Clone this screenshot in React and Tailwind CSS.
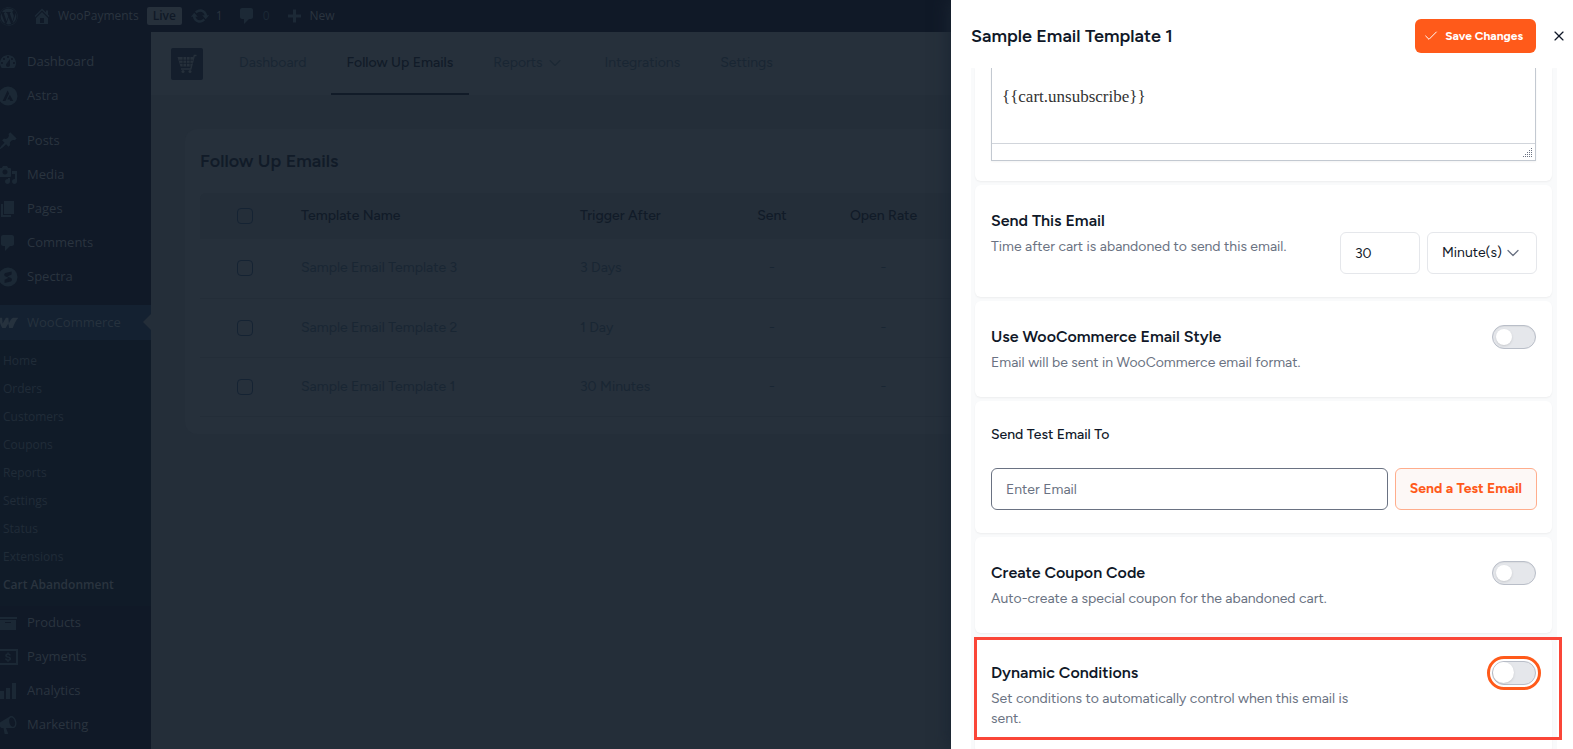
import React from 'react';
import { FaWordpress } from 'react-icons/fa';
import { ChevronDown, Check, X } from 'lucide-react';

const ICONS = {
  dashboard:
    'M3.76 16h12.48c1.1-1.37 1.76-3.11 1.76-5 0-4.42-3.58-8-8-8s-8 3.58-8 8c0 1.89.66 3.63 1.76 5zM10 4c.55 0 1 .45 1 1s-.45 1-1 1-1-.45-1-1 .45-1 1-1zM6 6c.55 0 1 .45 1 1s-.45 1-1 1-1-.45-1-1 .45-1 1-1zm8 0c.55 0 1 .45 1 1s-.45 1-1 1-1-.45-1-1 .45-1 1-1zm-5.37 5.55L12 7v6c0 1.1-.9 2-2 2s-2-.9-2-2c0-.57.24-1.08.63-1.45zM4 10c.55 0 1 .45 1 1s-.45 1-1 1-1-.45-1-1 .45-1 1-1zm12 0c.55 0 1 .45 1 1s-.45 1-1 1-1-.45-1-1 .45-1 1-1z',
  astra:
    'M10 .5a9.500 9.500 0 1 0 0 19a9.500 9.500 0 1 0 0-19zM9.600 4.600l1.500 3L7.400 14.900H4.600zM11.800 8.800l3.400 6.100h-2.900l-.6-1.400H9.400z',
  posts:
    'M10.44 3.02l1.82-1.82 6.36 6.35-1.83 1.82c-1.05-.68-2.48-.57-3.41.36l-.75.75c-.92.93-1.04 2.35-.35 3.41l-1.83 1.82-2.41-2.41-2.8 2.79c-.42.42-3.38 2.71-3.8 2.29s1.86-3.39 2.28-3.81l2.79-2.79L4.1 9.36l1.83-1.82c1.05.69 2.48.57 3.4-.36l.75-.75c.93-.92 1.05-2.35.36-3.41z',
  media:
    'M13 11V4c0-.55-.45-1-1-1h-1.67L9 1H5L3.67 3H2c-.55 0-1 .45-1 1v7c0 .55.45 1 1 1h10c.55 0 1-.45 1-1zM7 4.5c1.38 0 2.5 1.12 2.5 2.5S8.38 9.5 7 9.5 4.5 8.38 4.5 7 5.62 4.5 7 4.5zM14 6h5v10.5c0 1.38-1.12 2.5-2.5 2.5S14 17.88 14 16.5s1.12-2.5 2.5-2.5c.17 0 .34.02.5.05V9h-3V6zm-4 8.05V13h2v3.5c0 1.38-1.12 2.5-2.5 2.5S7 17.88 7 16.5 8.12 14 9.5 14c.17 0 .34.02.5.05z',
  pages: 'M6 15V2h10v13H6zm-1 1h8v2H3V5h2v11z',
  comments:
    'M5 2h9c1.1 0 2 .9 2 2v7c0 1.1-.9 2-2 2h-2l-5 5v-5H5c-1.1 0-2-.9-2-2V4c0-1.1.9-2 2-2z',
  spectra:
    'M10 .5a9.500 9.500 0 1 0 0 19a9.500 9.500 0 1 0 0-19zM13.600 4.400v3.100l-4.200 2.100 3.700 1.500c1.300 1 .9 2.700-.3 3.400L6.600 16v-3.200l4-2-3.500-1.500c-1.400-1-1.100-2.700.2-3.400z',
  woo: 'M1 4.800h3.100l.5 5.800 3.300-5.800h2.500l.5 5.400c1.300-3 2.400-4.600 4-5.400h5.600c-2.700 2.300-3.900 5.800-5.700 10.200h-3.600l-.9-4.600L7.700 15H4.200C2.500 12.400 1.700 9 1 4.800z',
  products: 'M19 4v2H1V4h18zM2 7h16v10H2V7zm11 3V9H7v1h6z',
  payments:
    'M0 2h20v16H0zM2 4v12h16V4zM9.200 5.500h1.600v1c1.100.2 1.900.8 2.100 1.900h-1.700c-.2-.5-.6-.7-1.200-.7-.7 0-1.100.3-1.100.8 0 .6.7.7 1.500.9 1.400.3 2.700.8 2.700 2.300 0 1.200-.9 1.900-2.300 2.100v1H9.200v-1C8 13.600 7 12.900 6.900 11.600h1.700c.1.600.6.9 1.400.9.700 0 1.300-.2 1.300-.8 0-.5-.4-.7-1.400-.9C8.500 10.500 7.200 10 7.200 8.600c0-1.100.8-1.900 2-2.100z',
  analytics: 'M18 18V2h-4v16h4zm-6 0V7H8v11h4zm-6 0v-8H2v8h4z',
  marketing:
    'M18.150 5.940c.46 1.620.38 3.220-.02 4.480-.42 1.280-1.260 2.180-2.300 2.480-.3.080-.6.100-1.020.100h-6.800l2.220 5.500c.02.300-.2.500-.48.500H6.950c-.28 0-.5-.2-.48-.5l-1-5.500H4.250c-1.100 0-2.200-.9-2.620-2.520-.44-1.600.1-3 1.060-3.500l9-5.420c.3-.2.5-.3.980-.46 2.100-.6 4.600 1.600 5.480 4.840zM15.300 11.700c1.500-.4 2.200-2.700 1.550-5.300-.7-2.500-2.400-4.200-3.900-3.800-1.500.4-2.200 2.700-1.500 5.300.7 2.500 2.400 4.200 3.850 3.800z',
  home: 'M16 8.500l1.530 1.530-1.060 1.060L10 4.600l-6.470 6.490-1.060-1.060L10 2.500l4 4v-2h2v4zm-6-2.460l6 5.990V18H4v-5.970zM12 17v-5H8v5h4z',
  update:
    'M10.200 3.280c3.530 0 6.430 2.610 6.920 6h2.080l-3.500 4-3.500-4h2.320c-.45-1.970-2.210-3.450-4.320-3.450-1.450 0-2.730.71-3.540 1.780L4.950 5.660C6.230 4.200 8.110 3.280 10.200 3.280zm-.4 13.440c-3.520 0-6.430-2.610-6.920-6H.8l3.500-4c1.170 1.330 2.330 2.670 3.500 4H5.480c.45 1.970 2.210 3.450 4.320 3.450 1.450 0 2.730-.71 3.540-1.780l1.710 1.950c-1.280 1.460-3.150 2.380-5.250 2.380z',
  plus: 'M17 8.500v3h-5v5H9v-5H4v-3h5v-5h3v5h5z',
};

function Icon({ name }) {
  return (
    <svg viewBox="0 0 20 20" className="size-5 shrink-0" fill="currentColor" fillRule="evenodd" aria-hidden="true">
      <path d={ICONS[name]} />
    </svg>
  );
}

function MenuItem({ icon, children }) {
  return (
    <li>
      <a href="#" className="flex h-[34px] items-center gap-[9px] pr-2 text-[#2a343f]">
        <span className="-ml-[2px] flex text-[#1b2835]"><Icon name={icon} /></span>
        {children}
      </a>
    </li>
  );
}

const SUBMENU = ['Home', 'Orders', 'Customers', 'Coupons', 'Reports', 'Settings', 'Status', 'Extensions'];

function Sidebar() {
  return (
    <nav aria-label="Admin menu" className="w-[151px] shrink-0 bg-[#101927] pt-[13px] text-[13px]">
      <ul>
        <MenuItem icon="dashboard">Dashboard</MenuItem>
        <MenuItem icon="astra">Astra</MenuItem>
      </ul>
      <ul className="pt-[11px]">
        <MenuItem icon="posts">Posts</MenuItem>
        <MenuItem icon="media">Media</MenuItem>
        <MenuItem icon="pages">Pages</MenuItem>
        <MenuItem icon="comments">Comments</MenuItem>
        <MenuItem icon="spectra">Spectra</MenuItem>
      </ul>
      <div className="relative mt-[11px]">
        <a href="#" className="flex h-[35px] items-center gap-[9px] bg-[#142131] text-[#26323e]">
          <span className="-ml-[2px] flex"><Icon name="woo" /></span>
          WooCommerce
        </a>
        <svg viewBox="0 0 8 16" className="absolute top-[9px] right-0 h-4 w-2 text-[#242e39]" fill="currentColor" aria-hidden="true">
          <path d="M8 0v16L0 8z" />
        </svg>
      </div>
      <ul className="bg-[#101b28] py-[7px] pl-[3px] text-xs text-[#202c38]">
        {SUBMENU.map((s) => (
          <li key={s}>
            <a href="#" className="flex h-7 items-center">{s}</a>
          </li>
        ))}
        <li>
          <a href="#" aria-current="page" className="flex h-7 items-center font-semibold text-[#2a343f]">Cart Abandonment</a>
        </li>
      </ul>
      <ul>
        <MenuItem icon="products">Products</MenuItem>
        <MenuItem icon="payments">Payments</MenuItem>
        <MenuItem icon="analytics">Analytics</MenuItem>
        <MenuItem icon="marketing">Marketing</MenuItem>
      </ul>
    </nav>
  );
}

function BarLink({ icon, children, dim }) {
  return (
    <a href="#" className={dim ? 'flex items-center gap-[6px] text-[#1b2835]' : 'flex items-center gap-[6px]'}>
      <span className="flex text-[#1c2936]"><Icon name={icon} /></span>
      {children}
    </a>
  );
}

function AdminBar() {
  return (
    <header className="flex h-8 items-center gap-[14px] bg-[#101927] text-xs text-[#2a343f]">
      <FaWordpress className="-ml-px size-[19px] shrink-0 text-[#1c2936]" aria-hidden="true" />
      <div className="flex items-center gap-2">
        <BarLink icon="home">WooPayments</BarLink>
        <span className="rounded-xs bg-[#26303b] px-[6px] text-xs leading-[18px] font-semibold text-[#101927]">Live</span>
        <BarLink icon="update">1</BarLink>
      </div>
      <BarLink icon="comments" dim>0</BarLink>
      <BarLink icon="plus">New</BarLink>
    </header>
  );
}

function Tab({ children, active }) {
  return (
    <a
      href="#"
      aria-current={active ? 'page' : undefined}
      className={
        active
          ? 'flex h-[63px] items-center border-b-2 border-[#111b28] px-4 font-medium text-[#111b28]'
          : 'flex h-[63px] items-center gap-[2px] px-4 pb-[2px] text-[#192633]'
      }
    >
      {children}
    </a>
  );
}

const ROWS = [
  ['Sample Email Template 3', '3 Days'],
  ['Sample Email Template 2', '1 Day'],
  ['Sample Email Template 1', '30 Minutes'],
];

function Box({ label }) {
  return (
    <input
      type="checkbox"
      aria-label={label}
      className="block size-4 appearance-none rounded-sm border border-[#152333]"
    />
  );
}

function Content() {
  return (
    <main className="min-w-0 flex-1 overflow-hidden bg-[#242e39] font-['Figtree','Lato',sans-serif] text-sm">
      <div className="flex h-[63px] items-center bg-[#26303b] pl-5">
        <svg viewBox="0 0 32 32" className="mr-5 size-8 shrink-0" aria-hidden="true">
          <rect width="32" height="32" rx="2" fill="#141e2c" />
          <path d="M25.500 7.500h-2.200l-3.500 13.500H10" fill="none" stroke="#26303b" strokeWidth="1.400" />
          <path d="M6.500 9h16.200l-2 9.500H9.500z" fill="#26303b" />
          <path d="M8 12.200h14M9 15.400h12.500M12 9v9.500M15.500 9v9.500M19 9v9.500" stroke="#141e2c" strokeWidth=".8" />
          <circle cx="12" cy="23.500" r="1.500" fill="#26303b" />
          <circle cx="19" cy="23.500" r="1.500" fill="#26303b" />
        </svg>
        <div className="flex gap-2">
          <Tab>Dashboard</Tab>
          <Tab active>Follow Up Emails</Tab>
          <Tab>Reports<ChevronDown className="size-5" strokeWidth={1.25} /></Tab>
          <Tab>Integrations</Tab>
          <Tab>Settings</Tab>
        </div>
      </div>
      <section className="mt-[34px] ml-[34px] rounded-l-xl bg-[#26303b] pt-5 pb-[17px] pl-[15px]">
        <h1 className="text-lg leading-6 font-semibold text-[#111b28]">Follow Up Emails</h1>
        <table className="mt-5 w-full table-fixed text-left">
          <thead className="bg-[#242e39] text-[#111b28]">
            <tr className="h-[46px]">
              <th className="w-[101px] rounded-tl-md pl-[37px]"><Box label="Select all" /></th>
              <th className="w-[279px] font-medium">Template Name</th>
              <th className="w-[148px] font-medium">Trigger After</th>
              <th className="w-22 text-center font-medium">Sent</th>
              <th className="text-center font-medium">Open Rate</th>
            </tr>
          </thead>
          <tbody className="text-[#192633]">
            {ROWS.map(([name, time]) => (
              <tr key={name} className="h-[59px] border-b border-[#232d38]">
                <td className="pl-[37px]"><Box label={name} /></td>
                <td>{name}</td>
                <td>{time}</td>
                <td className="text-center">-</td>
                <td className="text-center">-</td>
              </tr>
            ))}
          </tbody>
        </table>
      </section>
    </main>
  );
}

function Switch({ id, focused }) {
  return (
    <input
      id={id}
      type="checkbox"
      role="switch"
      className={
        focused
          ? "h-6 w-11 shrink-0 appearance-none rounded-full border border-[#b9bec8] bg-gray-200 outline-3 outline-offset-2 outline-[#ff5a1a] before:block before:size-[21px] before:rounded-full before:bg-white before:shadow-sm before:content-['']"
          : "flex h-6 w-11 shrink-0 appearance-none items-center rounded-full border border-[#b9bec8] bg-gray-200 pl-[3px] inset-shadow-xs before:block before:size-4 before:rounded-full before:bg-white before:shadow-sm before:content-['']"
      }
    />
  );
}

function Setting({ id, title, text, children }) {
  return (
    <div className="flex justify-between gap-4">
      <div className="max-w-[376px]">
        <label htmlFor={id} className="block text-base leading-6 font-semibold text-gray-900">{title}</label>
        <p className="mt-1 leading-5 text-gray-500">{text}</p>
      </div>
      {children}
    </div>
  );
}

const CARD = 'relative rounded-md bg-white px-4 py-6 shadow-xs';

function Drawer() {
  return (
    <aside
      aria-label="Sample Email Template 1"
      className="z-10 flex h-screen w-[622px] shrink-0 flex-col overflow-hidden bg-white font-['Figtree','Lato',sans-serif] text-sm shadow-[-2px_0_16px_#1a2532]"
    >
      <div className="flex h-[72px] shrink-0 items-center pr-[6px] pl-5">
        <h2 className="flex-1 text-lg font-semibold text-gray-900">Sample Email Template 1</h2>
        <button className="flex h-[34px] items-center gap-[6px] rounded-md bg-[#ff5a1a] pr-[13px] pl-2 text-xs font-bold text-white">
          <Check className="size-4" strokeWidth={1.5} />
          Save Changes
        </button>
        <button aria-label="Close" className="ml-[15px] text-gray-900"><X className="size-4" strokeWidth={1.75} /></button>
      </div>
      <div className="-mt-1 mr-4 ml-5 flex min-h-0 flex-1 flex-col gap-1 overflow-hidden bg-[#f9fafb] pr-[5px] pl-1 *:shrink-0">
        <div className="rounded-b-md bg-white px-4 pb-5 shadow-xs">
          <div className="border border-t-0 border-[#c3c9d1] shadow-xs">
            <p className="h-[75px] px-[10px] pt-[17px] font-[Georgia,'Liberation_Serif',serif] text-[17px] text-[#333]">{'{{cart.unsubscribe}}'}</p>
            <div className="flex h-[17px] items-end justify-end border-t border-[#d1d5db] p-[2px] text-gray-500">
              <svg viewBox="0 0 10 10" className="size-[10px]" fill="currentColor" aria-hidden="true">
                <path d="M8 0h1v1H8zM8 2h1v1H8zM6 2h1v1H6zM8 4h1v1H8zM6 4h1v1H6zM4 4h1v1H4zM8 6h1v1H8zM6 6h1v1H6zM4 6h1v1H4zM2 6h1v1H2zM8 8h1v1H8zM6 8h1v1H6zM4 8h1v1H4zM2 8h1v1H2zM0 8h1v1H0z" />
              </svg>
            </div>
          </div>
        </div>

        <div className={CARD}>
          <Setting id="delay" title="Send This Email" text="Time after cart is abandoned to send this email.">
            <div className="-mr-px -mb-px flex h-[65px] items-end gap-[7px]">
              <input id="delay" defaultValue="30" className="h-[42px] w-20 rounded-md border border-gray-200 px-[14px] text-gray-900" />
              <div className="relative">
                <select aria-label="Unit" className="h-[42px] w-[110px] appearance-none rounded-md border border-gray-200 px-[14px] text-gray-900">
                  <option>Minute(s)</option>
                </select>
                <ChevronDown className="pointer-events-none absolute top-[11px] right-[14px] size-5 text-gray-500" strokeWidth={1.5} />
              </div>
            </div>
          </Setting>
        </div>

        <div className={CARD}>
          <Setting id="woo-style" title="Use WooCommerce Email Style" text="Email will be sent in WooCommerce email format.">
            <Switch id="woo-style" />
          </Setting>
        </div>

        <div className={CARD}>
          <label htmlFor="test-email" className="block leading-5 font-medium text-gray-900">Send Test Email To</label>
          <div className="mt-[23px] -mr-px -mb-px flex gap-[7px]">
            <input
              id="test-email"
              type="email"
              placeholder="Enter Email"
              className="h-[42px] min-w-0 flex-1 rounded-md border border-gray-500 px-[14px] placeholder:text-gray-500"
            />
            <button className="h-[42px] rounded-md border border-[#ffad8c] bg-[#fdf8f6] px-[14px] font-bold text-[#ff5a1a]">Send a Test Email</button>
          </div>
        </div>

        <div className={CARD}>
          <Setting id="coupon" title="Create Coupon Code" text="Auto-create a special coupon for the abandoned cart.">
            <Switch id="coupon" />
          </Setting>
        </div>

        <div className={CARD}>
          <Setting id="conditions" title="Dynamic Conditions" text="Set conditions to automatically control when this email is sent.">
            <Switch id="conditions" focused />
          </Setting>
        </div>
      </div>
      <div aria-hidden="true" className="pointer-events-none absolute right-[11px] bottom-[9px] h-[103px] w-[588px] border-3 border-[#fa4638]" />
    </aside>
  );
}

export default function App() {
  return (
    <div className="relative flex h-screen overflow-hidden font-['Segoe_UI','Open_Sans',sans-serif]">
      <div className="flex min-w-0 flex-1 flex-col">
        <AdminBar />
        <div className="flex min-h-0 flex-1">
          <Sidebar />
          <Content />
        </div>
      </div>
      <Drawer />
    </div>
  );
}
